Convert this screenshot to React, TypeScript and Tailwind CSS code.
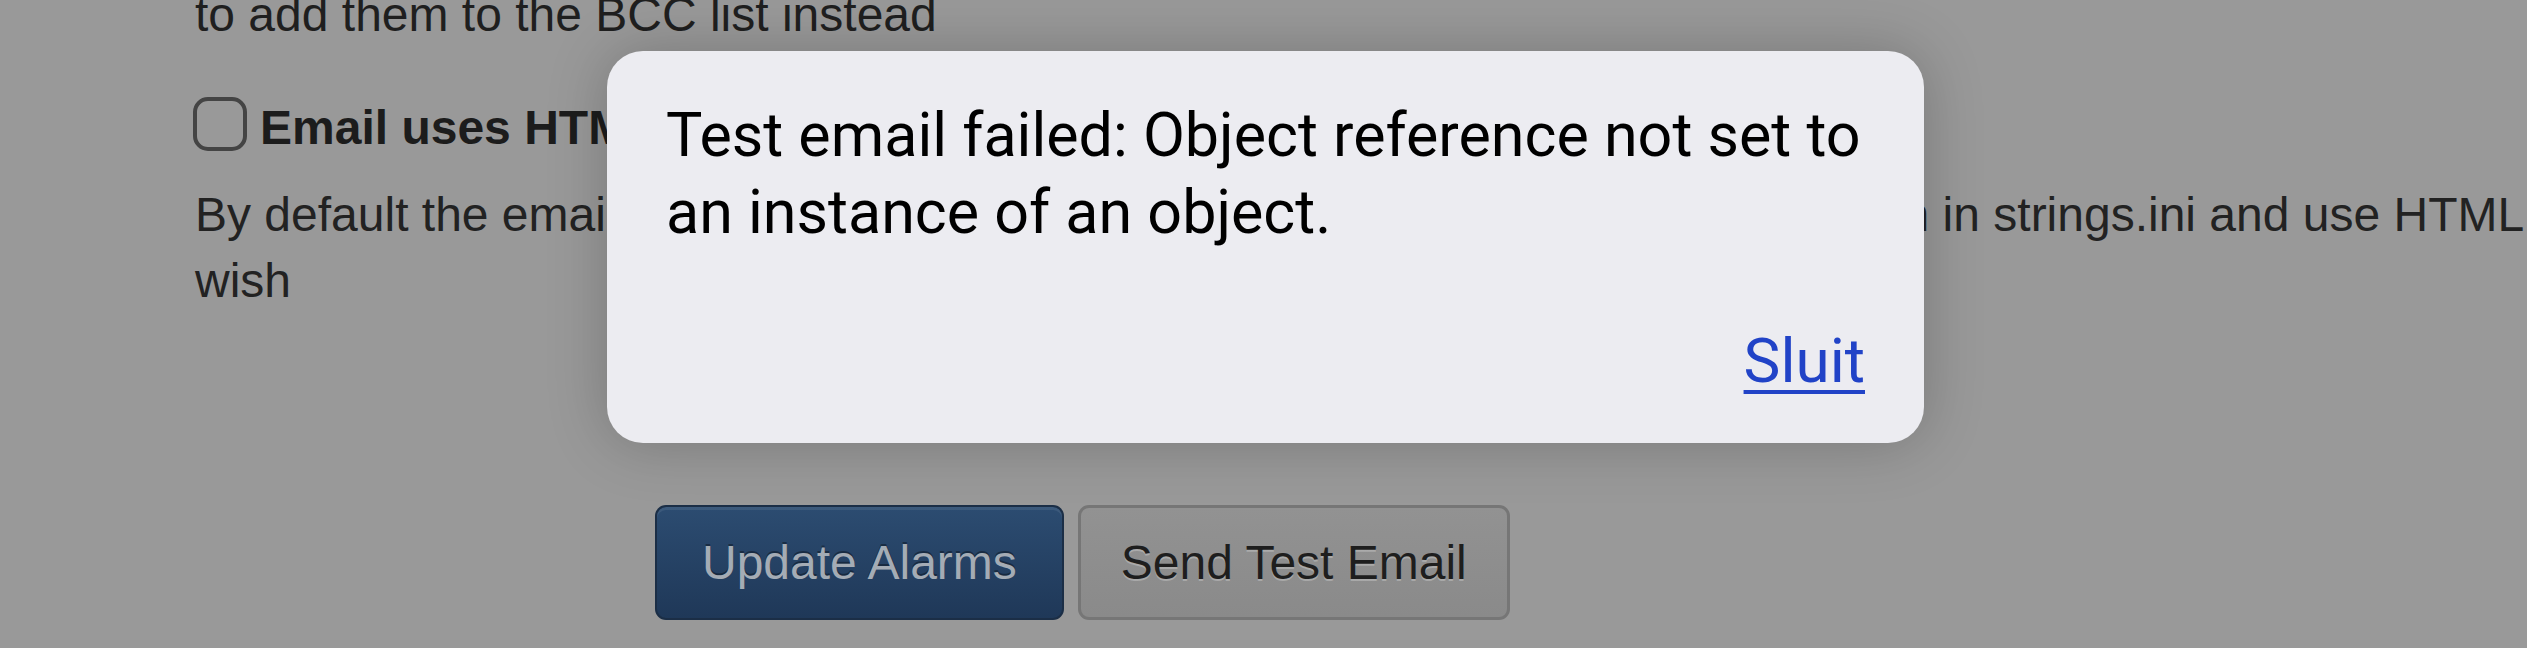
import React from "react";

export default function App() {
  return (
    <div className="relative h-[648px] w-full overflow-hidden bg-[#999999] font-['Liberation_Sans',Arial,sans-serif] text-[#1f1f1f]">
      <div className="pl-[195px]">
        <div className="mt-[-18px] whitespace-nowrap text-[48px] leading-[66px]">
          to add them to the BCC list instead
        </div>
        <div className="mt-[47px] flex h-[66px] items-center whitespace-nowrap">
          <div className="mt-[-8px] ml-[-2px] h-[54px] w-[54px] shrink-0 rounded-[15px] border-[4px] border-[#444444]" />
          <span className="ml-[13px] text-[48px] font-bold leading-[66px] text-[#1c1c1c]">
            Email uses HTML
          </span>
        </div>
        <div className="mt-[21px] text-[48px] leading-[66px] text-[#222222]">
          <div className="whitespace-nowrap">
            By default the email is sent as plain text. You may edit the e-mail template version in strings.ini and use HTML if you
          </div>
          <div className="whitespace-nowrap">wish</div>
        </div>
        <div className="ml-[460px] mt-[191px] flex gap-[14px]">
          <button className="h-[115px] rounded-[11px] border-2 border-[#1b2e46] bg-gradient-to-b from-[#2c4c71] to-[#1f3858] px-[45px] text-[48px] leading-[66px] text-[#a4acb5] shadow-[inset_0_3px_0_rgba(255,255,255,0.08)] [text-shadow:0_-2px_0_rgba(0,0,0,0.35)]">
            Update Alarms
          </button>
          <button className="h-[115px] rounded-[11px] border-[3px] border-[#767676] bg-gradient-to-b from-[#929292] to-[#8a8a8a] px-[40px] text-[48px] leading-[66px] text-[#1e1e1e] [text-shadow:0_2px_0_rgba(255,255,255,0.25)]">
            Send Test Email
          </button>
        </div>
      </div>

      <div className="absolute left-[607px] top-[51px] flex h-[392px] w-[1317px] flex-col rounded-[36px] bg-[#ececf1] px-[59px] pt-[46px] shadow-[0_0_60px_rgba(0,0,0,0.22)]">
        <div className="mr-[-30px] font-['Roboto',sans-serif] text-[61px] leading-[77px] text-black">
          Test email failed: Object reference not set to an instance of an object.
        </div>
        <div className="mt-[71px] flex justify-end">
          <span className="font-['Roboto',sans-serif] text-[62px] leading-[77px] text-[#2143c7] underline decoration-[4px] underline-offset-[8px]">
            Sluit
          </span>
        </div>
      </div>
    </div>
  );
}
